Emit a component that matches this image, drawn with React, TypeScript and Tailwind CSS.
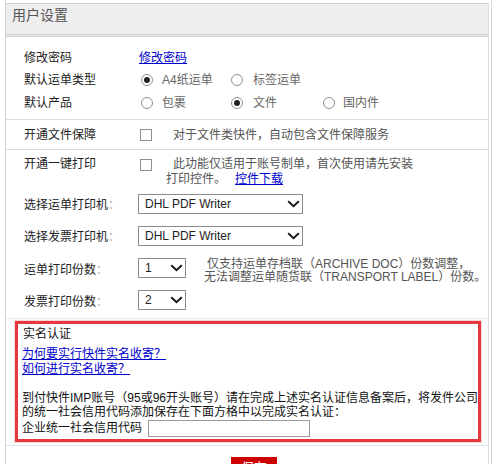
import React from "react";

const Radio = ({ checked }: { checked?: boolean }) => (
  <span className="w-[12px] h-[12px] rounded-full border border-[#8f8f8f] bg-white flex items-center justify-center shrink-0">
    {checked && <span className="w-[6px] h-[6px] rounded-full bg-[#222]" />}
  </span>
);

const Check = () => (
  <span className="block w-[12px] h-[12px] border border-[#8f8f8f] bg-white shrink-0" />
);

const Chevron = () => (
  <svg width="13" height="8" viewBox="0 0 13 8" className="shrink-0">
    <path d="M1.2 1.2 L6.5 6.2 L11.8 1.2" fill="none" stroke="#1a1a1a" strokeWidth="2" />
  </svg>
);

const Select = ({ value, w }: { value: string; w: string }) => (
  <div className={`${w} h-[20px] border border-[#8a8a8a] bg-white flex items-center justify-between pl-[6px] pr-[2px] text-[#222]`}>
    <span className="leading-[18px]">{value}</span>
    <Chevron />
  </div>
);

export default function App() {
  return (
    <div className="w-[498px] h-[464px] bg-white overflow-hidden font-['Liberation_Sans','Noto_Sans_CJK_SC',sans-serif] text-[12px] text-[#222]">
      <div className="ml-[5px] w-[487px] h-full border-x border-[#d6d6d6] pt-[3px]">
        <div className="mr-[2px] h-full border-r border-[#dedede]">
          {/* header */}
          <div className="h-[34px] border-t border-[#cfcfcf] bg-[#eeeeee] border-b-[3px] border-double border-b-[#cfcfcf] pl-[6px] pt-[2px] text-[14px] leading-[18px] text-[#555]">
            用户设置
          </div>

          {/* section 1 */}
          <div className="pl-[18px] pt-[10px] pb-[4px] border-b border-[#dddddd]">
            <div className="h-[22px] flex items-center">
              <span className="w-[114px]">修改密码</span>
              <a className="ml-[1px] text-[#0000cc] underline">修改密码</a>
            </div>
            <div className="h-[22px] flex items-center">
              <span className="w-[114px]">默认运单类型</span>
              <div className="ml-[3px] flex items-center text-[#666]">
                <div className="w-[90px] flex items-center">
                  <Radio checked />
                  <span className="ml-[9px]">A4纸运单</span>
                </div>
                <div className="w-[92px] flex items-center">
                  <Radio />
                  <span className="ml-[10px]">标签运单</span>
                </div>
              </div>
            </div>
            <div className="h-[24px] flex items-center">
              <span className="w-[114px]">默认产品</span>
              <div className="ml-[3px] flex items-center text-[#666]">
                <div className="w-[90px] flex items-center">
                  <Radio />
                  <span className="ml-[9px]">包裹</span>
                </div>
                <div className="w-[92px] flex items-center">
                  <Radio checked />
                  <span className="ml-[10px]">文件</span>
                </div>
                <div className="flex items-center">
                  <Radio />
                  <span className="ml-[8px]">国内件</span>
                </div>
              </div>
            </div>
          </div>

          {/* section 2 */}
          <div className="h-[30px] pl-[18px] flex items-center border-b border-[#dddddd]">
            <span className="w-[114px]">开通文件保障</span>
            <span className="ml-[2px]">
              <Check />
            </span>
            <span className="ml-[21px] text-[#555]">对于文件类快件，自动包含文件保障服务</span>
          </div>

          {/* section 3 */}
          <div className="pl-[18px] pt-[7px] pb-[8px] border-b border-[#e6eef2]">
            <div className="h-[30px] flex items-start leading-[15px]">
              <span className="w-[114px]">开通一键打印</span>
              <span className="ml-[2px] mt-[2px]">
                <Check />
              </span>
              <div className="ml-[14px] text-[#555]">
                <div className="pl-[7px]">此功能仅适用于账号制单，首次使用请先安装</div>
                <div>
                  打印控件。
                  <a className="ml-[9px] text-[#0000cc] underline">控件下载</a>
                </div>
              </div>
            </div>
            <div className="mt-[7px] h-[20px] flex items-center">
              <span className="w-[114px] pt-[1px]">
                选择运单打印机<span className="text-[#aaa]">：</span>
              </span>
              <Select value="DHL PDF Writer" w="w-[165px]" />
            </div>
            <div className="mt-[12px] h-[20px] flex items-center">
              <span className="w-[114px] pt-[1px]">
                选择发票打印机<span className="text-[#aaa]">：</span>
              </span>
              <Select value="DHL PDF Writer" w="w-[165px]" />
            </div>
            <div className="mt-[12px] h-[20px] flex items-start">
              <span className="w-[114px] leading-[20px] pt-[2px]">
                运单打印份数<span className="text-[#aaa]">：</span>
              </span>
              <Select value="1" w="w-[48px]" />
              <div className="ml-[18px] leading-[13px] text-[#555] whitespace-nowrap">
                <div className="pl-[3px]">仅支持运单存档联（ARCHIVE DOC）份数调整，</div>
                <div>无法调整运单随货联（TRANSPORT LABEL）份数。</div>
              </div>
            </div>
            <div className="mt-[12px] h-[20px] flex items-center">
              <span className="w-[114px] pt-[3px]">
                发票打印份数<span className="text-[#aaa]">：</span>
              </span>
              <Select value="2" w="w-[48px]" />
            </div>
          </div>

          {/* real-name box */}
          <div className="pb-[3px] border-b border-[#dde3e8]">
            <div className="ml-[9px] mt-[2px] w-[466px] h-[121px] border-[3px] border-[#e5383e] ring-1 ring-[#f6d6d6] bg-white pl-[4px] pt-[3px] text-[#111]">
              <div className="leading-[15px] pl-[1px]">实名认证</div>
              <div className="mt-[5px] leading-[15px]">
                <a className="text-[#0000cc] underline block w-fit">为何要实行快件实名收寄？</a>
                <a className="text-[#0000cc] underline block w-fit">如何进行实名收寄？</a>
              </div>
              <div className="mt-[14px] leading-[14px] whitespace-nowrap">
                <div>到付快件IMP账号（95或96开头账号）请在完成上述实名认证信息备案后，将发件公司</div>
                <div>的统一社会信用代码添加保存在下面方格中以完成实名认证：</div>
              </div>
              <div className="h-[18px] flex items-center">
                <span>企业统一社会信用代码</span>
                <span className="ml-[6px] block w-[162px] h-[17px] border border-[#9a9a9a] bg-white" />
              </div>
            </div>
          </div>

          {/* save button */}
          <div className="mt-[11px] ml-[225px]">
            <button className="w-[46px] h-[22px] bg-[#cc0000] text-white text-[13px] leading-[22px]">保存</button>
          </div>
        </div>
      </div>
    </div>
  );
}
